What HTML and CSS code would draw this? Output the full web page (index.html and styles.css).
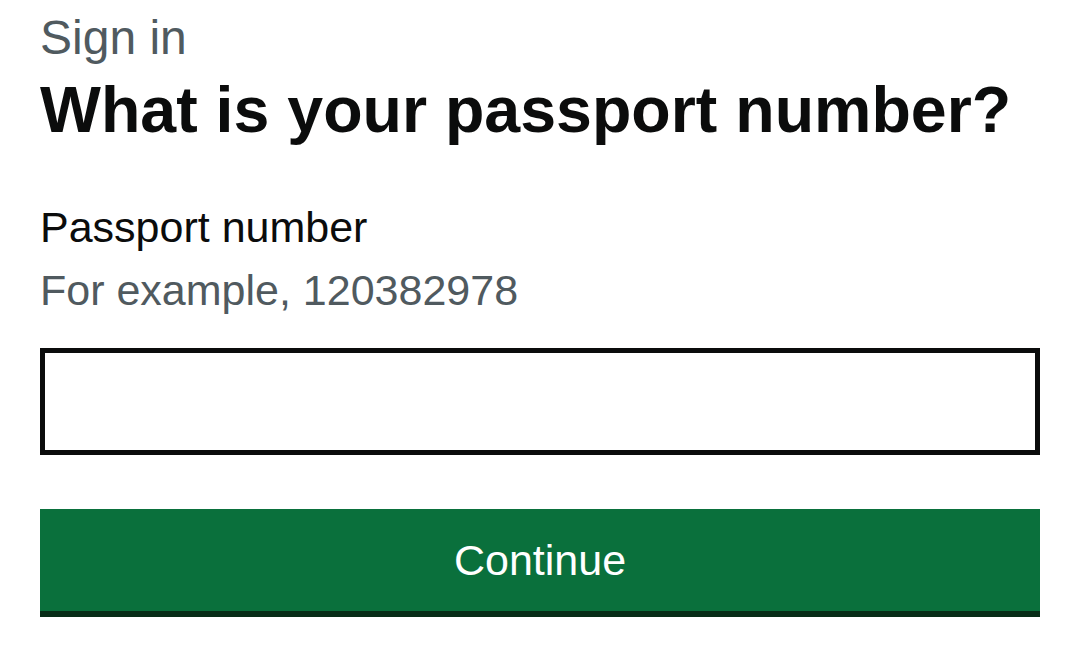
FILE: index.html
```html
<!DOCTYPE html>
<html lang="en">
<head>
<meta charset="utf-8">
<title>Sign in – What is your passport number?</title>
<link rel="stylesheet" href="styles.css">
</head>
<body>
<main class="page">
  <form class="form" onsubmit="return false">
    <span class="caption">Sign in</span>
    <h1 class="heading">What is your passport number?</h1>
    <label class="label" for="passport">Passport number</label>
    <div class="hint" id="passport-hint">For example, 120382978</div>
    <input class="input" id="passport" type="text" aria-describedby="passport-hint">
    <button class="button" type="submit">Continue</button>
  </form>
</main>
</body>
</html>
```

FILE: styles.css
```css
* { box-sizing: border-box; }

html, body {
  margin: 0;
  padding: 0;
  background: #ffffff;
}

body {
  font-family: "Liberation Sans", Arial, sans-serif;
  color: #0b0c0c;
}

.page {
  padding: 14px 40px 0 40px;
}

.form {
  display: flex;
  flex-direction: column;
  width: 1000px;
}

.caption {
  display: block;
  font-size: 48px;
  line-height: 48px;
  color: #505a5f;
}

.heading {
  margin: 16px 0 0 0;
  font-size: 64.5px;
  line-height: 64px;
  font-weight: 700;
  color: #0b0c0c;
}

.label {
  margin-top: 64px;
  font-size: 43px;
  line-height: 43px;
  color: #0b0c0c;
}

.hint {
  margin-top: 20px;
  font-size: 43px;
  line-height: 43px;
  color: #505a5f;
}

.input {
  margin-top: 36px;
  width: 1000px;
  height: 107px;
  border: 5px solid #0b0c0c;
  border-radius: 0;
  background: #ffffff;
  font-family: inherit;
  font-size: 43px;
  padding: 0 10px;
  outline: none;
}

.button {
  margin-top: 54px;
  width: 1000px;
  height: 108px;
  border: 0;
  border-bottom: 6px solid #082d18;
  border-radius: 0;
  background: #0a703c;
  color: #ffffff;
  font-family: inherit;
  font-size: 43px;
  line-height: 1;
  display: flex;
  align-items: center;
  justify-content: center;
  cursor: pointer;
  padding: 0;
}
```
